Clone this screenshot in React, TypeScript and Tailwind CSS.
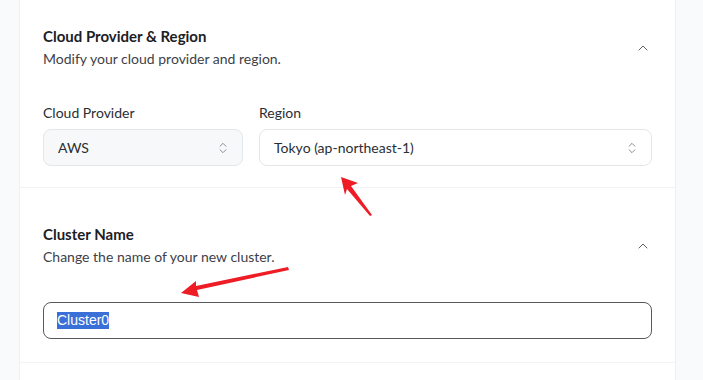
import { ChevronUp, ChevronsUpDown } from "lucide-react";

function Section({
  title,
  subtitle,
  top,
  children,
}: {
  title: string;
  subtitle: string;
  top: string;
  children: React.ReactNode;
}) {
  return (
    <div className={`border-b border-[#f1f3f5] pl-[23px] pr-[23px] ${top}`}>
      <div className="flex items-center justify-between">
        <div>
          <h2 className="text-[15px] leading-5 font-bold text-[#1c2025]">{title}</h2>
          <p className="mt-[3px] text-[14px] leading-5 text-[#3d4148]">{subtitle}</p>
        </div>
        <ChevronUp className="mr-[1px] h-4 w-4 text-[#5c6068]" strokeWidth={1.5} />
      </div>
      {children}
    </div>
  );
}

function Select({ value, muted }: { value: string; muted?: boolean }) {
  return (
    <div
      className={`flex h-[37px] items-center justify-between rounded-lg border border-[#e3e7ea] pl-[14px] pr-3 text-[14px] text-[#2a2e34] ${
        muted ? "bg-[#f6f8fa]" : "bg-white"
      }`}
    >
      <span>{value}</span>
      <ChevronsUpDown className="h-[14px] w-[14px] text-[#7a7f86]" strokeWidth={1.5} />
    </div>
  );
}

export default function App() {
  return (
    <div
      className="relative flex h-[380px] w-[703px] overflow-hidden bg-[#f9fafc]"
      style={{ fontFamily: "Lato, 'Noto Sans', sans-serif" }}
    >
      <div className="w-[19px] shrink-0" />
      <div className="w-[657px] shrink-0 border-x border-[#eef0f3] bg-white">
        <Section title="Cloud Provider & Region" subtitle="Modify your cloud provider and region." top="pt-[26px] pb-[21px]">
          <div className="mt-[34px] grid grid-cols-[200px_1fr] gap-4">
            <div>
              <div className="mb-[6px] text-[14px] leading-5 text-[#2a2e34]">Cloud Provider</div>
              <Select value="AWS" muted />
            </div>
            <div>
              <div className="mb-[6px] text-[14px] leading-5 text-[#2a2e34]">Region</div>
              <Select value="Tokyo (ap-northeast-1)" />
            </div>
          </div>
        </Section>
        <Section title="Cluster Name" subtitle="Change the name of your new cluster." top="pt-[36px] pb-[23px]">
          <div className="mt-[35px] flex h-[37px] items-center rounded-lg border border-[#58595c] pl-[13px]">
            <span
              className="bg-[#3b6fd8] text-[14px] leading-[17px] text-white"
              style={{ fontFamily: "'Liberation Sans', Arial, sans-serif" }}
            >
              Cluster0
            </span>
          </div>
        </Section>
      </div>
      <div className="flex-1" />

      <svg className="pointer-events-none absolute inset-0" width="703" height="380" viewBox="0 0 703 380">
        <polygon points="372,215 370,216 347,189 345,195 341,177 358,183 351,186" fill="#ee1c25" />
        <polygon points="288,267 289,270 197,290 199,297 181,293 196,281 196,286" fill="#ee1c25" />
      </svg>
    </div>
  );
}
